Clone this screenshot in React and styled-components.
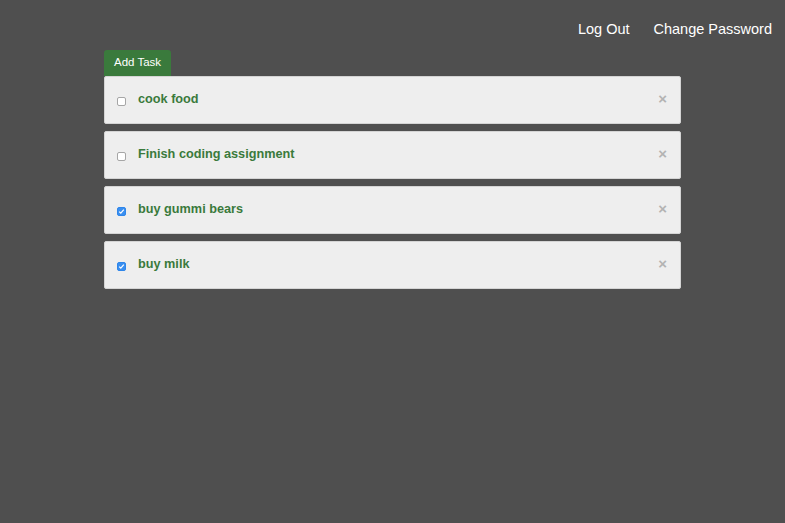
import React, { useState } from "react";
import styled, { createGlobalStyle } from "styled-components";

const Global = createGlobalStyle`
  html, body { margin: 0; padding: 0; background: #4f4f4f; }
  body { font-family: "Liberation Sans", Arial, Helvetica, sans-serif; }
  #root { min-height: 523px; }
`;

const Page = styled.div`
  min-height: 523px;
  background: #4f4f4f;
  padding-top: 20px;
  box-sizing: border-box;
`;

const Nav = styled.nav`
  display: flex;
  justify-content: flex-end;
  gap: 24px;
  padding-right: 13px;
  height: 20px;
`;

const NavLink = styled.a`
  color: #ffffff;
  font-size: 14.5px;
  line-height: 18px;
  text-decoration: none;
  cursor: pointer;
`;

const Main = styled.main`
  margin-left: 104px;
  width: 577px;
  margin-top: 10px;
`;

const AddButton = styled.button`
  display: block;
  height: 26px;
  padding: 0 10px 2px;
  background: #3a7a3c;
  color: #ffffff;
  border: none;
  border-radius: 3px 3px 0 0;
  font-family: "Liberation Sans", Arial, sans-serif;
  font-size: 11.5px;
  line-height: 24px;
  cursor: pointer;
`;

const List = styled.ul`
  list-style: none;
  margin: 0;
  padding: 0;
  display: flex;
  flex-direction: column;
  gap: 7px;
`;

const Card = styled.li`
  display: flex;
  align-items: center;
  height: 48px;
  box-sizing: border-box;
  background: #eeeeee;
  border: 1px solid #d4d4d4;
  border-radius: 2px;
  padding: 0 12px 3px 12px;
`;

const Check = styled.span`
  width: 9px;
  height: 9px;
  box-sizing: border-box;
  border-radius: 2px;
  margin-top: 5px;
  border: 1px solid ${(p) => (p.$checked ? "#2f86ea" : "#a6a6a6")};
  background: ${(p) => (p.$checked ? "#3a8ff0" : "#ffffff")};
  display: flex;
  align-items: center;
  justify-content: center;
  flex-shrink: 0;
  cursor: pointer;
`;

const Label = styled.span`
  margin-left: 12px;
  color: #3a7a3c;
  font-weight: bold;
  font-size: 12.7px;
  flex: 1;
`;

const Close = styled.span`
  color: #b3b3b3;
  font-size: 15px;
  font-weight: bold;
  line-height: 1;
  margin-right: 1px;
  cursor: pointer;
`;

const initial = [
  { id: 1, text: "cook food", done: false },
  { id: 2, text: "Finish coding assignment", done: false },
  { id: 3, text: "buy gummi bears", done: true },
  { id: 4, text: "buy milk", done: true },
];

export default function App() {
  const [tasks, setTasks] = useState(initial);
  const toggle = (id) =>
    setTasks((t) => t.map((x) => (x.id === id ? { ...x, done: !x.done } : x)));
  return (
    <Page>
      <Global />
      <Nav>
        <NavLink>Log Out</NavLink>
        <NavLink>Change Password</NavLink>
      </Nav>
      <Main>
        <AddButton>Add Task</AddButton>
        <List>
          {tasks.map((t) => (
            <Card key={t.id}>
              <Check $checked={t.done} onClick={() => toggle(t.id)}>
                {t.done && (
                  <svg width="7" height="7" viewBox="0 0 7 7">
                    <path d="M1.2 3.6 L2.8 5.2 L5.8 1.6" fill="none" stroke="#fff" strokeWidth="1.2" />
                  </svg>
                )}
              </Check>
              <Label>{t.text}</Label>
              <Close>×</Close>
            </Card>
          ))}
        </List>
      </Main>
    </Page>
  );
}
